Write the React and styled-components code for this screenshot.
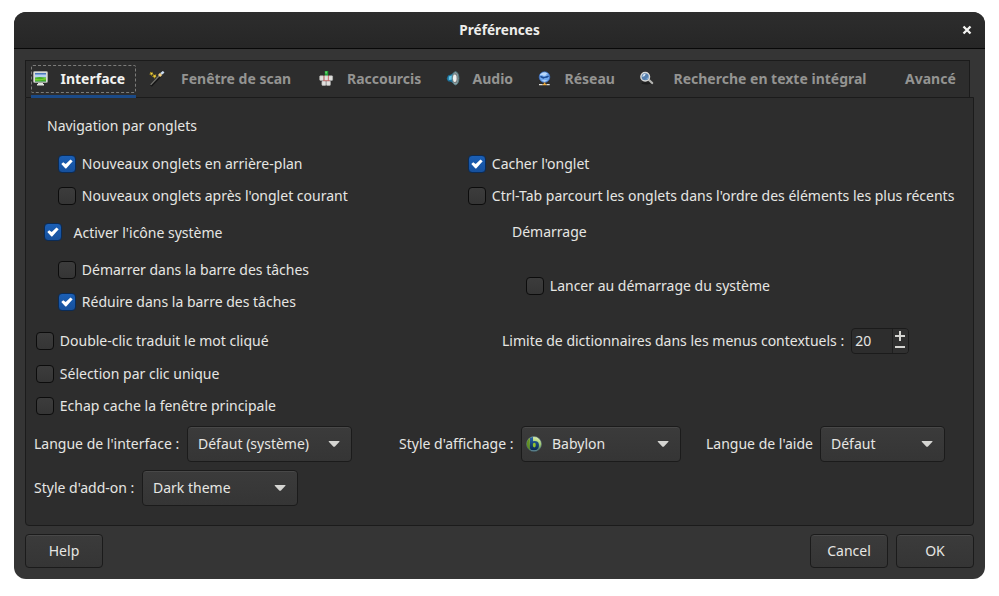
import React from "react";
import styled, { createGlobalStyle } from "styled-components";

const GlobalStyle = createGlobalStyle`
  * { box-sizing: border-box; }
  body {
    margin: 0;
    background: #fff;
    color: #e6e6e3;
    font: 14px/20px "Noto Sans", sans-serif;
    overflow: hidden;
  }
  svg { display: block; flex: none; }
`;

const Dialog = styled.main`
  width: 971px;
  height: 567px;
  margin: 12px 14px 17px;
  background: #353535;
  border-radius: 12px;
  overflow: hidden;
  display: flex;
  flex-direction: column;
`;

const TitleBar = styled.header`
  flex: none;
  height: 37px;
  background: linear-gradient(#2d2d2d, #262626);
  border-bottom: 1px solid #080808;
  display: grid;
  grid-template-columns: 40px 1fr 40px;
  align-items: center;
`;

const Title = styled.h1`
  grid-column: 2;
  margin: 0;
  text-align: center;
  font-size: 13.6px;
  line-height: 20px;
  font-weight: 700;
  color: #eeeeec;
`;

const CloseButton = styled.button`
  border: 0;
  padding: 0;
  background: none;
  height: 36px;
  display: flex;
  align-items: center;
  padding-left: 17px;
`;

const Body = styled.section`
  padding: 11px 11px 0;
`;

const TabBar = styled.nav`
  width: 945px;
  height: 37px;
  background: #2d2d2d;
  border: 1px solid #1b1b1b;
  border-bottom: 0;
  padding: 4px 0 0 5px;
  display: grid;
  grid-template-columns: 117px 170px 127px 91px 102px 266px 60px;
  justify-items: start;
`;

const Tab = styled.button`
  width: ${(p) => (p.$active ? "105px" : "auto")};
  height: 28px;
  padding: 0 0 0 1px;
  border: 1px ${(p) => (p.$active ? "dashed #7c7c7a" : "solid transparent")};
  border-width: ${(p) => (p.$active ? "1px" : "1px 0")};
  border-radius: 2px;
  background: none;
  color: ${(p) => (p.$active ? "#f2f2f0" : "#949492")};
  font: 700 14px/20px "Noto Sans", sans-serif;
  display: flex;
  align-items: center;
  gap: ${(p) => p.$gap}px;
  white-space: nowrap;
`;

const Panel = styled.section`
  position: relative;
  width: 949px;
  height: 429px;
  background: #2d2d2d;
  border: 1px solid #1b1b1b;
  border-radius: 0 0 4px 4px;
  padding-top: 18px;
`;

const ActiveLine = styled.i`
  position: absolute;
  left: 5px;
  top: -3px;
  width: 105px;
  height: 3px;
  background: #1b4a87;
`;

const SectionTitle = styled.h2`
  margin: ${(p) => p.$margin};
  font-size: 14px;
  line-height: 20px;
  font-weight: 400;
`;

const NavGrid = styled.div`
  display: grid;
  grid-template-columns: 410px 1fr;
  row-gap: 12px;
  padding-left: 32px;
`;

const Columns = styled.div`
  display: grid;
  grid-template-columns: ${(p) => p.$left}px 1fr;
`;

const Stack = styled.div`
  display: flex;
  flex-direction: column;
  padding: ${(p) => p.$pad};
  gap: ${(p) => p.$gap}px;
`;

const Nested = styled(Stack)`
  margin-left: 14px;
`;

const CheckLabel = styled.label`
  height: 20px;
  display: flex;
  align-items: center;
  gap: ${(p) => (p.$group ? 11.5 : 5.8)}px;
  white-space: nowrap;
`;

const CheckText = styled.span`
  padding-top: ${(p) => (p.$group ? 2 : 0)}px;
`;

const Box = styled.span`
  width: 18px;
  height: 18px;
  flex: none;
  border-radius: 4px;
  border: 1px solid ${(p) => (p.$on ? "#0b2b55" : "#0c0c0c")};
  background: ${(p) => (p.$on ? "linear-gradient(#1b5fb5, #16509c)" : "linear-gradient(#3c3c3c, #353535)")};
  display: grid;
  place-items: center;
`;

const SpinRow = styled.label`
  display: flex;
  align-items: center;
  height: 26px;
  white-space: nowrap;
`;

const Spin = styled.span`
  width: 58px;
  height: 26px;
  margin-left: 7px;
  border: 1px solid #1b1b1b;
  border-radius: 4px;
  background: #2d2d2d;
  display: grid;
  grid-template-columns: 40px 16px;
  overflow: hidden;
`;

const SpinValue = styled.span`
  padding-left: 3px;
  line-height: 24px;
`;

const SpinButtons = styled.span`
  border-left: 1px solid #1f1f1f;
  background: #303030;
`;

const ComboRow = styled.div`
  display: flex;
  align-items: center;
  height: 36px;
  margin-bottom: 8px;
  padding-left: 8px;
  white-space: nowrap;
`;

const FieldLabel = styled.span`
  width: ${(p) => p.$width}px;
`;

const raised = `
  border: 1px solid #1b1b1b;
  border-radius: 4px;
  background: linear-gradient(#3b3b3b, #353535);
  box-shadow: inset 0 1px #484848;
  color: #e6e6e3;
  font: 14px/20px "Noto Sans", sans-serif;
`;

const Combo = styled.button`
  ${raised}
  width: ${(p) => p.$width}px;
  height: 36px;
  padding: 0 9px 0 ${(p) => (p.$icon ? 4 : 10)}px;
  margin-right: ${(p) => p.$after || 0}px;
  display: flex;
  align-items: center;
  justify-content: space-between;
`;

const ComboValue = styled.span`
  display: flex;
  align-items: center;
  gap: 10px;
`;

const Footer = styled.footer`
  display: flex;
  gap: 8px;
  padding-top: 8px;
`;

const PushButton = styled.button`
  ${raised}
  width: 78px;
  height: 34px;
  padding: 0;
  &:first-child { margin-right: auto; }
`;

const MonitorIcon = () => (
  <svg width="16" height="16" viewBox="0 0 16 16">
    <rect x=".5" y=".5" width="14" height="11" rx="1" fill="#d9dad6" stroke="#a4a6a1" />
    <rect x="2" y="2" width="11" height="8.5" fill="#4d79ba" />
    <path d="M2 3.5h11V7H2z" fill="#b4d0f2" />
    <path d="M2 6.5q4-1 11 0v4H2z" fill="#45ae25" />
    <path d="M2 7.5q6 2 11-1v2q-5 1-11 1z" fill="#79ce35" />
    <path d="M5 12h5v1h1v1.5H4V13h1z" fill="#e2e3df" />
  </svg>
);

const WandIcon = () => (
  <svg width="16" height="16" viewBox="0 0 16 16">
    <path d="M2 15 11.2 5.2" stroke="#151515" strokeWidth="2.2" />
    <path d="M1.7 13.8 10.5 4.5" stroke="#767672" strokeWidth="1.2" />
    <path d="m10.1 5 2-2.1" stroke="#f0cf83" strokeWidth="3" />
    <path d="m12.1 2.9 2.6-2.1" stroke="#cbdcf2" strokeWidth="2.4" />
    <path d="m1 .8 1.3.6L3.7.7l-.2 1.6 1 1-1.4.3-.7 1.3L1.7 3.7.2 3.3l1-1z" fill="#b3951c" />
    <path d="m4.2 3.2 1.4.7 1.7-.6-.5 1.6 1 1.3-1.6.1-1 1.4-.6-1.7-1.6-.4 1.3-1z" fill="#c6a51c" />
    <path d="M2 2h1.4v1.2H2zM5 4.6h1.4v1.2H5z" fill="#ead657" />
  </svg>
);

const KeysIcon = () => (
  <svg width="16" height="16" viewBox="0.7 0 16 16">
    <path d="M6.5 0h3.4v5H6.5z" fill="#20a436" />
    <path d="M7 .6h1.6v2H7z" fill="#70d475" />
    <g fill="#e0e0de" stroke="#b7b7b5" strokeWidth=".6">
      <rect x="1.4" y="4.8" width="4" height="4.6" rx=".7" />
      <rect x="5.9" y="4.8" width="4" height="4.6" rx=".7" />
      <rect x="10.3" y="4.8" width="4" height="4.6" rx=".7" />
      <rect x="3.6" y="10" width="4" height="4.4" rx=".7" />
      <rect x="8.1" y="10" width="4" height="4.4" rx=".7" />
    </g>
    <path d="M5.7 4.5v5M10.1 4.5v5M5 9.7h6.5" stroke="#d86b69" strokeWidth=".8" />
  </svg>
);

const AudioIcon = () => (
  <svg width="16" height="16" viewBox="0.5 0.2 16 16">
    <path d="m2.5 4.8 3-1L10 .8v13.4L5.5 11l-3-.5L1.2 8z" fill="#1d759f" />
    <path d="m3.3 5.6 3-.8L9 2.5v6L3.3 9.2z" fill="#67c7e8" />
    <ellipse cx="10" cy="7.5" rx="3.4" ry="6.6" fill="#8fa5a9" stroke="#53787f" />
    <ellipse cx="9.8" cy="7.5" rx="2.4" ry="5" fill="#777c7d" />
    <ellipse cx="9.3" cy="7.5" rx="1.8" ry="3.7" fill="#f1f1ef" />
  </svg>
);

const NetworkIcon = () => (
  <svg width="16" height="16" viewBox="0 0 16 16">
    <circle cx="7.5" cy="6.1" r="5.3" fill="#70a8ed" stroke="#3d6fc0" strokeWidth=".8" />
    <path d="M3.2 3.3 5.8 1.5h3l2 1.3-2 .7.7.8-2.5.8-2-1-2.2.5z" fill="#b9d7fa" />
    <path d="M3.4 4.8 7 6.1l4.3-1.7.8.8-1.8 1.5-2.5.3-1.5.8-3-1.5z" fill="#1c4b95" />
    <path d="M4.5 9.3q3-1.3 6 0L7.5 11z" fill="#a9cdf8" />
    <path d="M6.8 11.5h1.6V13H6.8z" fill="#f5a62c" />
    <path d="M2 13.6h3.7M9.4 13.6h3.3" stroke="#dededb" strokeWidth="1.2" />
    <path d="M5.7 13.6h3.7" stroke="#f0ae41" strokeWidth="1.4" />
  </svg>
);

const SearchIcon = () => (
  <svg width="16" height="16" viewBox="0 0 16 16">
    <ellipse cx="7" cy="12.3" rx="4.5" ry="1.1" fill="#1c1c1c" />
    <path d="m10 9 3.2 3" stroke="#b4b4b1" strokeWidth="2.2" strokeLinecap="round" />
    <circle cx="6.2" cy="5.7" r="4.3" fill="#557fae" stroke="#d8d8d6" strokeWidth="1.5" />
    <path d="M3.4 6Q3.4 2.8 6.8 2.7 6.3 5.5 3.4 6" fill="#d6e6f5" />
    <path d="M5.7 8.6q3.3-.7 3.5-3.8 1.5 3.6-3.5 3.8" fill="#8db6dd" />
  </svg>
);

const BabylonIcon = () => (
  <svg width="16" height="16" viewBox="0 0 16 16">
    <defs>
      <linearGradient id="sphere" x1=".9" y1="0" x2=".5" y2="1">
        <stop offset="0" stopColor="#f0f8c8" />
        <stop offset=".45" stopColor="#a4cf70" />
        <stop offset="1" stopColor="#174454" />
      </linearGradient>
      <linearGradient id="stem" x1="0" y1="0" x2="0" y2="1">
        <stop offset="0" stopColor="#2a67a8" />
        <stop offset="1" stopColor="#0a274e" />
      </linearGradient>
    </defs>
    <circle cx="8" cy="8" r="7.5" fill="url(#sphere)" stroke="#55727a" strokeWidth=".6" />
    <path d="M3.8 1.9Q.2 5 .9 9.6q.8 3 3.2 4.6L3.5 9z" fill="#638f25" />
    <path d="M4 1.8 7 .9v4.3q5.3-.8 5.9 3 .5 4.3-3.2 6Q5.4 15.3 4 11.9z" fill="url(#stem)" />
    <ellipse cx="8.3" cy="9.1" rx="1.5" ry="2.4" fill="#92c32d" />
    <path d="M2.8 12.8q5 3.2 9.7.1-4.8 4.4-9.7-.1" fill="#8fb2be" />
  </svg>
);

const TABS = [
  { label: "Interface", Icon: MonitorIcon, gap: 11.5 },
  { label: "Fenêtre de scan", Icon: WandIcon, gap: 16 },
  { label: "Raccourcis", Icon: KeysIcon, gap: 12 },
  { label: "Audio", Icon: AudioIcon, gap: 10.5 },
  { label: "Réseau", Icon: NetworkIcon, gap: 11.5 },
  { label: "Recherche en texte intégral", Icon: SearchIcon, gap: 18.5 },
  { label: "Avancé", gap: 0 },
];

function Check({ on, group, children }) {
  return (
    <CheckLabel $group={group}>
      <Box $on={on}>
        {on && (
          <svg width="16" height="16" viewBox="0 0 16 16">
            <path d="m2.3 8 1.9-1.8 2.5 1.9 4.8-4.7 2.2 1.8-6.5 7.3H6.4z" fill="#fff" />
          </svg>
        )}
      </Box>
      <CheckText $group={group}>{children}</CheckText>
    </CheckLabel>
  );
}

function Select({ width, Icon, after, children }) {
  return (
    <Combo $width={width} $icon={!!Icon} $after={after}>
      <ComboValue>
        {Icon && <Icon />}
        {children}
      </ComboValue>
      <svg width="16" height="16" viewBox="0 0 16 16">
        <path d="M2.8 5h10.6v.8L9 10.4q-.9.8-1.8 0L2.8 5.8z" fill="#d5d5d2" />
      </svg>
    </Combo>
  );
}

export default function App() {
  return (
    <>
      <GlobalStyle />
      <Dialog>
        <TitleBar>
          <Title>Préférences</Title>
          <CloseButton aria-label="Fermer">
            <svg width="10" height="10" viewBox="0 0 10 10">
              <path d="m1.5 1.5 7 7m0-7-7 7" stroke="#f4f4f2" strokeWidth="2.3" />
            </svg>
          </CloseButton>
        </TitleBar>
        <Body>
          <TabBar>
            {TABS.map(({ label, Icon, gap }, i) => (
              <Tab key={label} $active={i === 0} $gap={gap}>
                {Icon && <Icon />}
                {label}
              </Tab>
            ))}
          </TabBar>
          <Panel>
            <ActiveLine />
            <SectionTitle $margin="0 0 18px 21px">Navigation par onglets</SectionTitle>
            <NavGrid>
              <Check on>Nouveaux onglets en arrière-plan</Check>
              <Check on>Cacher l'onglet</Check>
              <Check>Nouveaux onglets après l'onglet courant</Check>
              <Check>Ctrl-Tab parcourt les onglets dans l'ordre des éléments les plus récents</Check>
            </NavGrid>
            <Columns $left={486}>
              <Stack $pad="16px 0 0 18px" $gap={18}>
                <Check on group>Activer l'icône système</Check>
                <Nested $gap={12}>
                  <Check>Démarrer dans la barre des tâches</Check>
                  <Check on>Réduire dans la barre des tâches</Check>
                </Nested>
              </Stack>
              <Stack $pad="16px 0 0" $gap={34}>
                <SectionTitle $margin="0">Démarrage</SectionTitle>
                <Nested>
                  <Check>Lancer au démarrage du système</Check>
                </Nested>
              </Stack>
            </Columns>
            <Columns $left={476}>
              <Stack $pad="19px 0 0 10px" $gap={12.5}>
                <Check>Double-clic traduit le mot cliqué</Check>
                <Check>Sélection par clic unique</Check>
                <Check>Echap cache la fenêtre principale</Check>
              </Stack>
              <Stack $pad="16px 0 0">
                <SpinRow>
                  Limite de dictionnaires dans les menus contextuels :
                  <Spin>
                    <SpinValue>20</SpinValue>
                    <SpinButtons>
                      <svg width="15" height="24" viewBox="0 0 15 24">
                        <path d="M2 7h10M7 2v10M2 18h10" stroke="#d5d5d2" strokeWidth="2" />
                      </svg>
                    </SpinButtons>
                  </Spin>
                </SpinRow>
              </Stack>
            </Columns>
            <Stack $pad="10px 0 0">
              <ComboRow>
                <FieldLabel $width={153}>Langue de l'interface :</FieldLabel>
                <Select width={165} after={47}>Défaut (système)</Select>
                <FieldLabel $width={122}>Style d'affichage :</FieldLabel>
                <Select width={160} Icon={BabylonIcon} after={25}>Babylon</Select>
                <FieldLabel $width={114}>Langue de l'aide</FieldLabel>
                <Select width={125}>Défaut</Select>
              </ComboRow>
              <ComboRow>
                <FieldLabel $width={108}>Style d'add-on :</FieldLabel>
                <Select width={156}>Dark theme</Select>
              </ComboRow>
            </Stack>
          </Panel>
          <Footer>
            <PushButton>Help</PushButton>
            <PushButton>Cancel</PushButton>
            <PushButton>OK</PushButton>
          </Footer>
        </Body>
      </Dialog>
    </>
  );
}
